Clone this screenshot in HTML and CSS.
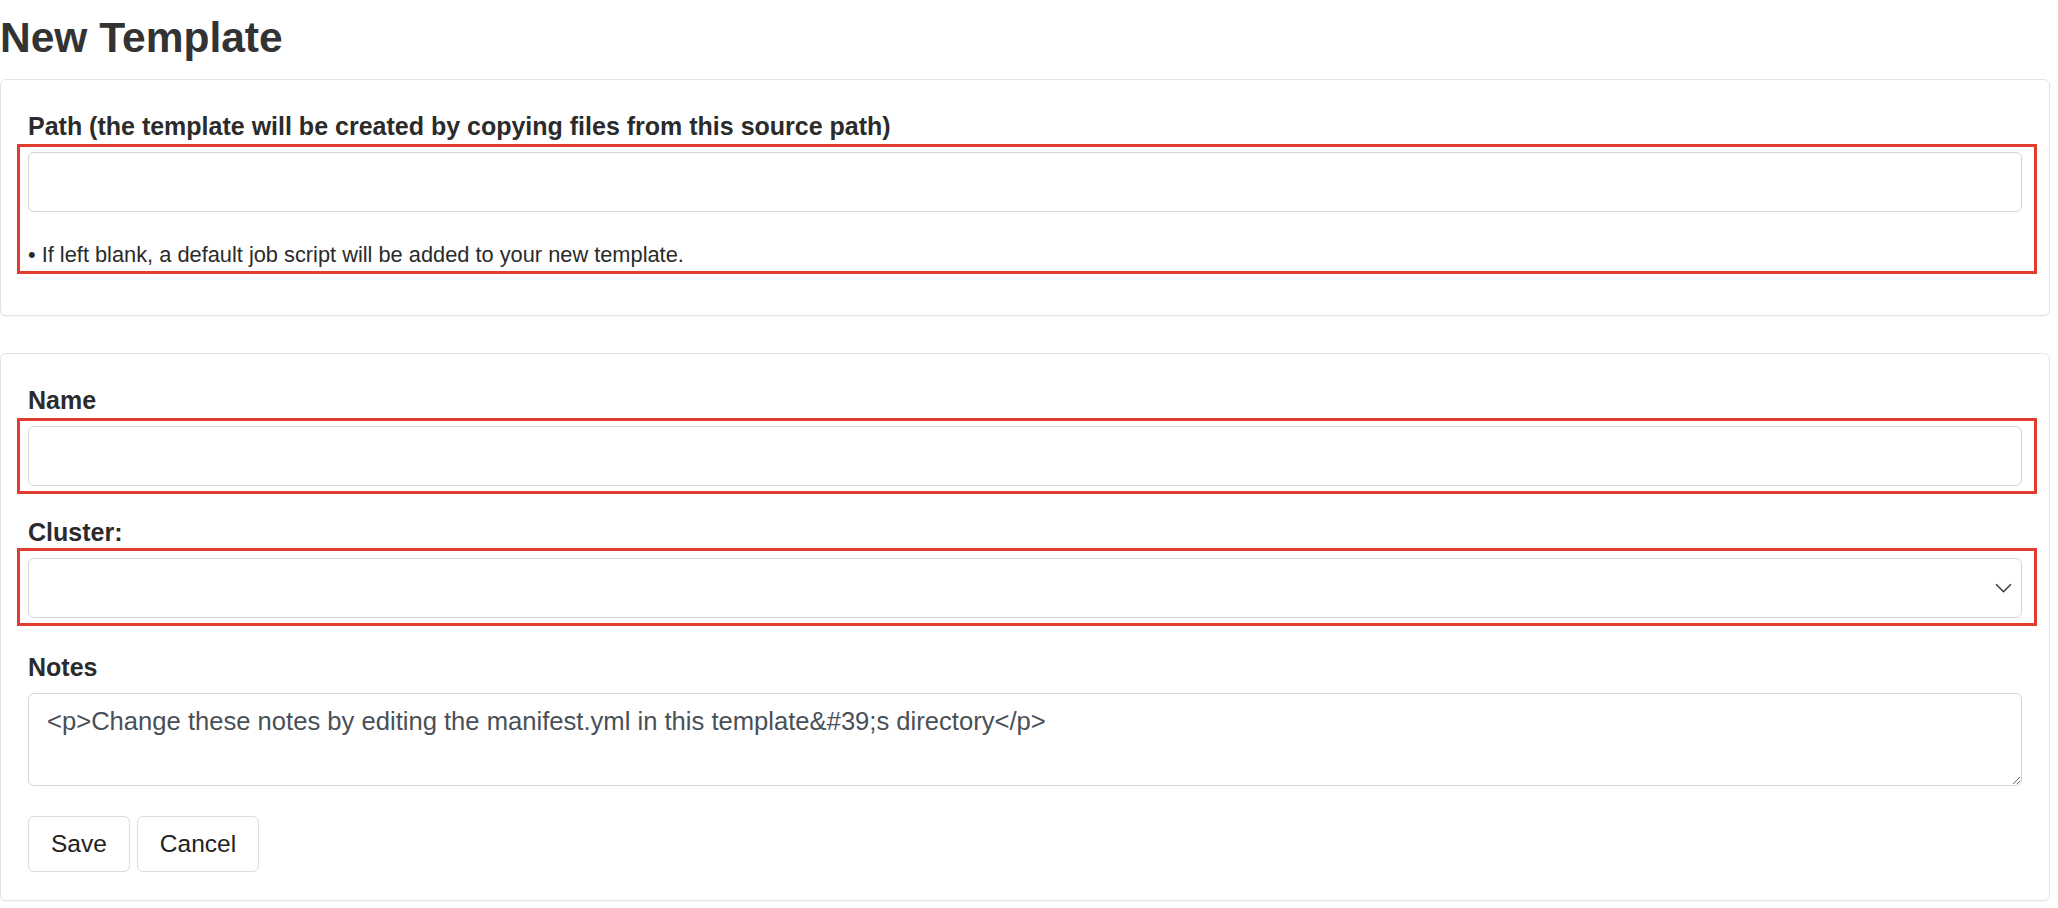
FILE: index.html
```html
<!DOCTYPE html>
<html>

<head>
    <title>New Template</title>
    <meta name="viewport" content="width=device-width, initial-scale=1.0">
    <link rel="stylesheet" href="styles.css">
</head>

<body>
    <div class="page">
        <h1 class="page-title">New Template</h1>

        <!-- Source path card -->
        <div class="card source-card">
            <div class="form-group">
                <label class="form-label" for="template-path">Path (the template will be created by copying files from this source path)</label>
                <div class="marked">
                    <input class="form-control" id="template-path" type="text">
                    <p class="form-hint">&bull; If left blank, a default job script will be added to your new template.</p>
                </div>
            </div>
        </div>

        <!-- Template details card -->
        <div class="card details-card">
            <form>
                <div class="form-group is-marked">
                    <label class="form-label" for="template-name">Name</label>
                    <div class="marked">
                        <input class="form-control" id="template-name" type="text">
                    </div>
                </div>

                <div class="form-group is-marked cluster-group">
                    <label class="form-label" for="template-cluster">Cluster:</label>
                    <div class="marked marked-loose">
                        <div class="select-wrap">
                            <select class="form-control form-select" id="template-cluster">
                                <option></option>
                            </select>
                            <svg class="select-arrow" xmlns="http://www.w3.org/2000/svg" viewBox="0 0 16 9">
                                <path d="M1 1l7 7 7-7" />
                            </svg>
                        </div>
                    </div>
                </div>

                <div class="form-group notes-group">
                    <label class="form-label" for="template-notes">Notes</label>
                    <textarea class="form-control notes" id="template-notes">&lt;p&gt;Change these notes by editing the manifest.yml in this template&amp;#39;s directory&lt;/p&gt;</textarea>
                </div>

                <div class="actions">
                    <button type="submit" class="btn">Save</button>
                    <button type="button" class="btn">Cancel</button>
                </div>
            </form>
        </div>
    </div>
</body>

</html>
```

FILE: styles.css
```css
:root {
    --text-color: #333333;
    --muted-text: #495057;
    --card-border: #e3e3e3;
    --input-border: #ced4da;
    --mark-color: #e03c2f;
}

body {
    margin: 0;
    font-family: 'Liberation Sans', Helvetica, Arial, sans-serif;
    font-size: 24px;
    line-height: 1.5;
    color: var(--text-color);
    background: #ffffff;
}

.page {
    padding: 0 8px 0 0;
}

.page-title {
    font-size: 42.5px;
    font-weight: 700;
    line-height: 50px;
    margin: 13px 0 16px;
    color: #333;
}

.card {
    border: 1px solid var(--card-border);
    border-radius: 6px;
    padding: 28px 27px 24px;
    margin-bottom: 37px;
    box-shadow: 0 1px 1px rgba(0, 0, 0, 0.03);
}

.source-card {
    padding-bottom: 41px;
}

.details-card {
    padding-bottom: 28px;
}

.form-group {
    margin-bottom: 30px;
}

.form-group.is-marked {
    margin-bottom: 20px;
}

.form-group.cluster-group {
    margin-bottom: 23px;
}

.form-group:last-child {
    margin-bottom: 0;
}

.notes-group {
    margin-bottom: 30px;
}

.form-label {
    display: block;
    font-size: 25px;
    font-weight: 700;
    line-height: 36px;
    margin-bottom: 8px;
    color: #2b2b2b;
}

/* red review frame drawn round a field */
.marked {
    border: 3px solid var(--mark-color);
    padding: 5px 12px 5px 8px;
    margin: -8px -15px 0 -11px;
}

.marked-loose {
    padding-top: 7px;
    margin-top: -10px;
}

.source-card .marked {
    padding-bottom: 0;
}

.form-control {
    display: block;
    width: 100%;
    height: 60px;
    box-sizing: border-box;
    padding: 9px 18px;
    font-family: inherit;
    font-size: 24px;
    line-height: 36px;
    color: var(--muted-text);
    background: #ffffff;
    border: 1px solid var(--input-border);
    border-radius: 6px;
    outline: none;
}

.form-hint {
    margin: 27px 0 0;
    font-size: 21.8px;
    line-height: 32px;
    color: #2b2b2b;
}

.select-wrap {
    position: relative;
}

.form-select {
    appearance: none;
    -webkit-appearance: none;
}

.select-arrow {
    position: absolute;
    right: 10px;
    top: 25px;
    width: 17px;
    height: 10px;
    fill: none;
    stroke: #343a40;
    stroke-width: 1.4;
    pointer-events: none;
}

.notes {
    height: 93px;
    font-size: 25.6px;
    resize: vertical;
}

.actions {
    display: flex;
    gap: 7px;
}

.btn {
    font-family: inherit;
    font-size: 24.5px;
    line-height: 36px;
    padding: 9px 22px;
    color: #222;
    background: #ffffff;
    border: 1px solid #dcdcdc;
    border-radius: 6px;
    cursor: pointer;
}
```
